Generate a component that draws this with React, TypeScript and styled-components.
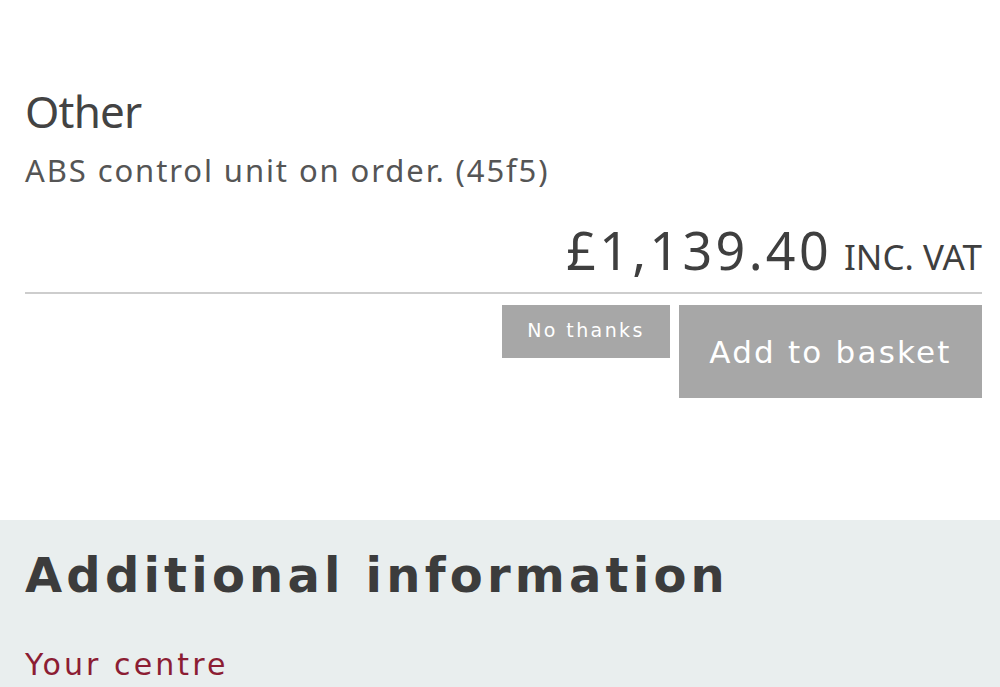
import React from 'react';
import styled, { createGlobalStyle } from 'styled-components';

const GlobalStyle = createGlobalStyle`
  html, body {
    margin: 0;
    padding: 0;
    background: #ffffff;
    overflow: hidden;
  }
  body {
    font-family: 'Noto Sans', 'Open Sans', sans-serif;
    color: #4c4c4c;
  }
`;

const Page = styled.div`
  width: 1000px;
  height: 687px;
  overflow: hidden;
  display: flex;
  flex-direction: column;
`;

const ProductSection = styled.section`
  flex: 0 0 520px;
  box-sizing: border-box;
  padding: 86px 18px 0 25px;
  display: flex;
  flex-direction: column;
`;

const Title = styled.h2`
  margin: 0;
  font-weight: 400;
  font-size: 44px;
  line-height: 50px;
  letter-spacing: -0.8px;
  color: #434343;
`;

const Description = styled.p`
  margin: 14px 0 0;
  font-size: 31px;
  line-height: 40px;
  letter-spacing: 1.9px;
  color: #555555;
`;

const PriceRow = styled.div`
  margin-top: 32px;
  display: flex;
  justify-content: flex-end;
  align-items: baseline;
  gap: 12px;
  padding-bottom: 14px;
  border-bottom: 2px solid #cdcdcd;
`;

const Price = styled.span`
  font-size: 52px;
  line-height: 56px;
  letter-spacing: 3.3px;
  color: #3f3f3f;
`;

const Vat = styled.span`
  font-size: 35px;
  line-height: 40px;
  color: #3f3f3f;
`;

const Actions = styled.div`
  margin-top: 11px;
  display: flex;
  justify-content: flex-end;
  align-items: flex-start;
  gap: 9px;
`;

const ActionButton = styled.button<{ $size: 'small' | 'large' }>`
  border: none;
  background: #a7a7a7;
  color: #ffffff;
  font-family: 'DejaVu Sans', sans-serif;
  cursor: pointer;
  display: flex;
  justify-content: center;
  width: ${({ $size }) => ($size === 'large' ? '303px' : '168px')};
  height: ${({ $size }) => ($size === 'large' ? '93px' : '53px')};
  font-size: ${({ $size }) => ($size === 'large' ? '31px' : '19px')};
  letter-spacing: ${({ $size }) => ($size === 'large' ? '2.2px' : '2.4px')};
  align-items: ${({ $size }) => ($size === 'large' ? 'center' : 'flex-start')};
  padding: ${({ $size }) => ($size === 'large' ? '0' : '14px 0 0')};
`;

const InfoSection = styled.section`
  flex: 1;
  background: #e9eeee;
  padding: 25px 25px 0;
`;

const InfoHeading = styled.h2`
  margin: 0;
  font-family: 'DejaVu Sans', sans-serif;
  font-weight: 700;
  font-size: 48px;
  line-height: 60px;
  letter-spacing: 4.2px;
  color: #3c3c3c;
`;

const CentreLink = styled.a`
  display: block;
  margin-top: 40px;
  font-family: 'DejaVu Sans', sans-serif;
  font-size: 30px;
  line-height: 40px;
  letter-spacing: 3.1px;
  color: #8c1d33;
  text-decoration: none;
`;

export default function App() {
  return (
    <Page>
      <GlobalStyle />
      <ProductSection>
        <Title>Other</Title>
        <Description>ABS control unit on order. (45f5)</Description>
        <PriceRow>
          <Price>£1,139.40</Price>
          <Vat>INC. VAT</Vat>
        </PriceRow>
        <Actions>
          <ActionButton $size="small">No thanks</ActionButton>
          <ActionButton $size="large">Add to basket</ActionButton>
        </Actions>
      </ProductSection>
      <InfoSection>
        <InfoHeading>Additional information</InfoHeading>
        <CentreLink href="#">Your centre</CentreLink>
      </InfoSection>
    </Page>
  );
}
